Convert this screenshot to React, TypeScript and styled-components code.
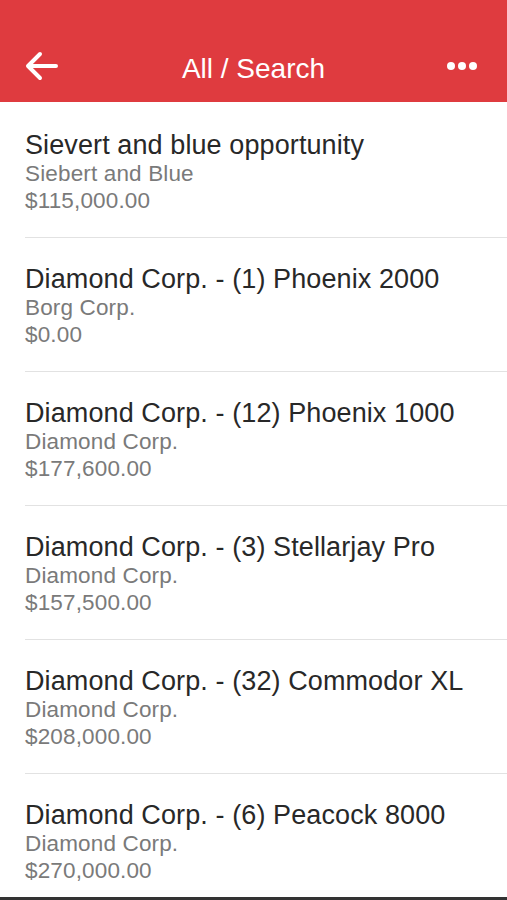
import React from "react";
import styled, { createGlobalStyle } from "styled-components";

const items = [
  { title: "Sievert and blue opportunity", account: "Siebert and Blue", amount: "$115,000.00" },
  { title: "Diamond Corp. - (1) Phoenix 2000", account: "Borg Corp.", amount: "$0.00" },
  { title: "Diamond Corp. - (12) Phoenix 1000", account: "Diamond Corp.", amount: "$177,600.00" },
  { title: "Diamond Corp. - (3) Stellarjay Pro", account: "Diamond Corp.", amount: "$157,500.00" },
  { title: "Diamond Corp. - (32) Commodor XL", account: "Diamond Corp.", amount: "$208,000.00" },
  { title: "Diamond Corp. - (6) Peacock 8000", account: "Diamond Corp.", amount: "$270,000.00" },
];

const App = () => {
  return (
    <>
      <GlobalStyle />
      <Screen>
        <Header>
          <IconButton aria-label="Back">
            <svg width="34" height="30" viewBox="0 0 34 30" fill="none">
              <path
                d="M31 15H4M15 3L3 15l12 12"
                stroke="#fff"
                strokeWidth="4"
                strokeLinecap="round"
                strokeLinejoin="round"
              />
            </svg>
          </IconButton>
          <Title>All / Search</Title>
          <IconButton aria-label="More">
            <Dots>
              <Dot />
              <Dot />
              <Dot />
            </Dots>
          </IconButton>
        </Header>
        <List>
          {items.map((item) => (
            <Row key={item.title}>
              <RowTitle>{item.title}</RowTitle>
              <RowMeta>{item.account}</RowMeta>
              <RowAmount>{item.amount}</RowAmount>
            </Row>
          ))}
        </List>
      </Screen>
    </>
  );
};

const GlobalStyle = createGlobalStyle`
  html, body {
    margin: 0;
    padding: 0;
    background: #fff;
  }
  body {
    font-family: "Liberation Sans", Arial, sans-serif;
  }
`;

const Screen = styled.div`
  width: 507px;
  height: 900px;
  overflow: hidden;
  background: #fff;
  border-bottom: 3px solid #333;
  box-sizing: border-box;
`;

const Header = styled.header`
  height: 102px;
  box-sizing: border-box;
  padding: 36px 25px 0 25px;
  background: #df3b3f;
  display: flex;
  align-items: center;
  justify-content: space-between;
`;

const IconButton = styled.button`
  border: none;
  background: none;
  padding: 0;
  width: 34px;
  height: 34px;
  display: flex;
  align-items: center;
  justify-content: center;
  margin-top: -6px;
  cursor: pointer;
`;

const Title = styled.h1`
  margin: 0;
  font-size: 28px;
  font-weight: 400;
  color: #fff;
`;

const Dots = styled.span`
  display: flex;
  gap: 3px;
  margin-left: -6px;
`;

const Dot = styled.span`
  width: 8px;
  height: 8px;
  border-radius: 50%;
  background: #fff;
`;

const List = styled.ul`
  list-style: none;
  margin: 0;
  padding: 2px 0 0 25px;
`;

const Row = styled.li`
  padding: 26px 0 23px 0;
  border-bottom: 1px solid #e2e2e2;
`;

const RowTitle = styled.div`
  font-size: 27px;
  line-height: 30px;
  color: #282828;
  white-space: nowrap;
  letter-spacing: 0.1px;
`;

const RowMeta = styled.div`
  font-size: 22.5px;
  line-height: 28px;
  color: #7a7a7a;
  letter-spacing: 0.15px;
`;

const RowAmount = styled.div`
  font-size: 22.5px;
  line-height: 26px;
  color: #7a7a7a;
  letter-spacing: 0.15px;
`;

export default App;
